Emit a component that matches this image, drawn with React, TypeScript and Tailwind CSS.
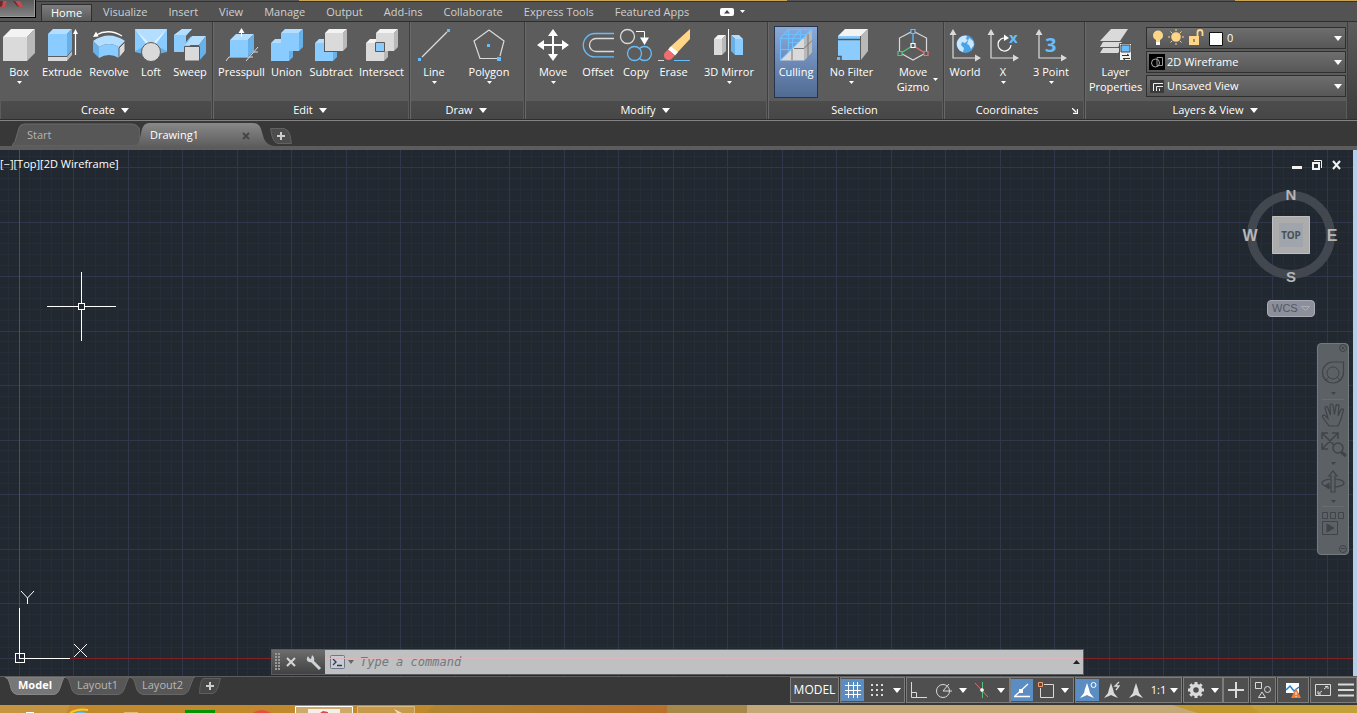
import React from "react";

type Kids = { children?: React.ReactNode };

const BLUE = { front: "#8accff", top: "#b3deff", side: "#67b0e8" };
const GRAY = { front: "#dadada", top: "#f3f3f3", side: "#b9b9b9" };

function Icon({ children }: Kids) {
  return (
    <svg width="32" height="32" viewBox="0 0 32 32" fill="none" className="block overflow-visible" aria-hidden="true">
      {children}
    </svg>
  );
}

function Cube({ x, y, w, d, c }: { x: number; y: number; w: number; d: number; c: typeof BLUE }) {
  return (
    <g>
      <path d={`M${x} ${y + d}h${w}v${w}h${-w}z`} fill={c.front} />
      <path d={`M${x} ${y + d}l${d} ${-d}h${w}l${-d} ${d}z`} fill={c.top} />
      <path d={`M${x + w} ${y + d}l${d} ${-d}v${w}l${-d} ${d}z`} fill={c.side} />
    </g>
  );
}

function Caret({ small }: { small?: boolean }) {
  return small ? (
    <svg width="5" height="3" viewBox="0 0 5 3" className="block" aria-hidden="true">
      <path d="M0 0h5L2.5 3z" fill="#fff" />
    </svg>
  ) : (
    <svg width="8" height="5" viewBox="0 0 8 5" className="block shrink-0" aria-hidden="true">
      <path d="M0 0h8L4 5z" fill="#fff" />
    </svg>
  );
}

function Axes() {
  return (
    <g>
      <path d="M4 5v24h23" stroke="#dadada" strokeWidth="1.2" />
      <path d="M0.500 6L4 0l3.500 6zM26 25.500l6 3.500-6 3.500z" fill="#dadada" />
    </g>
  );
}

const icons = {
  box: <Cube x={0} y={0} w={24} d={8} c={GRAY} />,
  extrude: (
    <g>
      <path d="M2 28h19v4H2z" fill="#dadada" />
      <path d="M21 28l5-6v4l-5 6z" fill="#b9b9b9" />
      <path d="M2 5h19v22H2z" fill={BLUE.front} />
      <path d="M2 5l5-5h19l-5 5z" fill={BLUE.top} />
      <path d="M21 5l5-5v21l-5 6z" fill={BLUE.side} />
      <path d="M29.500 4v22" stroke="#fff" strokeWidth="1.200" />
      <path d="M27 5l2.500-5L32 5z" fill="#fff" />
    </g>
  ),
  revolve: (
    <g>
      <path d="M0 12Q16 1 32 12l-6 6Q16 12 6 18z" fill={BLUE.top} />
      <path d="M6 18Q16 12 26 18v11Q16 23 6 29z" fill={BLUE.front} />
      <path d="M0 12l6 6v11l-6-6z" fill={BLUE.side} />
      <path d="M26 19l6-6v9l-6 7z" fill="#dadada" stroke="#555" />
      <path d="M3 6Q16-1 29 7" stroke="#fff" strokeWidth="1.300" />
      <path d="M0 8l3-5.500 2.500 5z" fill="#fff" />
    </g>
  ),
  loft: (
    <g>
      <path d="M0 0h32v23l-9 2H8l-8-2z" fill={BLUE.side} />
      <path d="M0 0h32L22 16H10z" fill={BLUE.top} />
      <path d="M0 0v22l8-4 3-4zM32 0v22l-8-4-3-4z" fill={BLUE.front} />
      <path d="M0 0l12 16 3-1zM32 0L20 16l-3-1z" fill="#dff1ff" />
      <circle cx="16" cy="23" r="9.500" fill="#dadada" stroke="#5a5a5a" />
    </g>
  ),
  sweep: (
    <g>
      <path d="M0 6l8-6h10l-6 7v7h6l-7 9H0z" fill={BLUE.front} />
      <path d="M0 6l8-6h10l-6 6z" fill={BLUE.top} />
      <path d="M11 14l6-7v7z" fill={BLUE.side} />
      <path d="M11 16l7-9h14l-7 9z" fill={BLUE.top} />
      <path d="M25 16l7-9v17l-7 8z" fill={BLUE.side} />
      <path d="M10.500 17.500h15v14.500h-15z" fill="#dadada" stroke="#5a5a5a" />
    </g>
  ),
  presspull: (
    <g>
      <path d="M0 32l3-4h24M20 32l12-14M26 23h6" stroke="#dadada" />
      <path d="M4 11h18v17H4z" fill={BLUE.front} />
      <path d="M4 11l6-6h18l-6 6z" fill={BLUE.top} />
      <path d="M22 11l6-6v17l-6 6z" fill={BLUE.side} />
      <path d="M15.500 3v5" stroke="#fff" />
      <path d="M12.500 4l3-5 3 5z" fill="#fff" />
    </g>
  ),
  union: (
    <g>
      <Cube x={0} y={10} w={18} d={4} c={BLUE} />
      <Cube x={10} y={0} w={18} d={4} c={BLUE} />
      <path d="M2 15h15v6H2z" fill={BLUE.front} />
    </g>
  ),
  subtract: (
    <g>
      <Cube x={0} y={10} w={18} d={4} c={BLUE} />
      <path d="M9 3h20v20H9z" fill="#5a5a5a" />
      <Cube x={10} y={0} w={18} d={4} c={GRAY} />
    </g>
  ),
  intersect: (
    <g>
      <Cube x={0} y={10} w={18} d={4} c={GRAY} />
      <Cube x={10} y={0} w={18} d={4} c={GRAY} />
      <path d="M9.500 13.500h9v9h-9z" fill={BLUE.front} stroke="#5a5a5a" />
    </g>
  ),
  line: (
    <g>
      <path d="M4 28L29 3" stroke="#dadada" strokeWidth="1.200" />
      <path d="M0 29h3v3H0zM29 0h3v3h-3z" fill="#67bdfb" />
    </g>
  ),
  polygon: (
    <g>
      <path d="M16 1L1 12l6 17.500h17M27 27l4-15L16 1" stroke="#dadada" strokeWidth="1.200" />
      <path d="M14 15h3v3h-3zM24 28h4v4h-4z" fill="#67bdfb" />
    </g>
  ),
  move: (
    <g>
      <path d="M16 5v22M5 16h22" stroke="#fff" strokeWidth="2" />
      <path d="M11 7l5-7 5 7zM11 25l5 7 5-7zM7 11l-7 5 7 5zM25 11l7 5-7 5z" fill="#fff" />
    </g>
  ),
  offset: (
    <g>
      <path d="M32 4.500H13a11.700 11.700 0 000 23.400h19" stroke="#67bdfb" strokeWidth="1.300" />
      <path d="M32 9.500H14a6.500 6.500 0 000 13h18" stroke="#dadada" strokeWidth="1.300" />
    </g>
  ),
  copy: (
    <g>
      <circle cx="7.500" cy="7.500" r="7" stroke="#dadada" strokeWidth="1.300" />
      <circle cx="14.500" cy="24.500" r="7" stroke="#67bdfb" strokeWidth="1.300" />
      <path d="M19.500 19.500a7 7 0 110 10" stroke="#67bdfb" strokeWidth="1.300" />
      <path d="M16 2.500h8.500V9" stroke="#fff" />
      <path d="M20 8.500h9L24.500 16z" fill="#fff" />
    </g>
  ),
  erase: (
    <g>
      <path d="M0 31.500h6" stroke="#dadada" />
      <path d="M16 31.500h16" stroke="#67bdfb" />
      <path d="M32 0v10L18 25l-7-6z" fill="#ffd588" />
      <path d="M13 17.500l-3 3 7 6 3-3.500z" fill="#fff" />
      <path d="M10 20.500l-3 3c-3 4 1 9 6 7l4-4z" fill="#f26d70" />
    </g>
  ),
  mirror: (
    <g>
      <path d="M1 10h8v16H1z" fill={GRAY.front} />
      <path d="M1 10l4-4h8l-4 4z" fill={GRAY.top} />
      <path d="M9 10l4-4v16l-4 4z" fill={GRAY.side} />
      <path d="M22 10h8v16h-8z" fill={BLUE.front} />
      <path d="M22 10l-4-4h8l4 4z" fill={BLUE.top} />
      <path d="M22 10l-4-4v16l4 4z" fill={BLUE.side} />
      <path d="M15.500 0v32" stroke="#fff" />
    </g>
  ),
  culling: (
    <g>
      <path d="M0 31.500L32 0v23l-8 8.500z" fill="#dadada" />
      <path d="M24 9l8-9v23l-8 8.500z" fill="#b9b9b9" />
      <path d="M12 20v11M14 19.500h10l8-8M28 5v23" stroke="#777" />
      <path d="M0.500 31V9l8-8.500h23M0.500 9.500H23M4 5.500h23M0.500 20.500H11M12.500 19V9.500l8-9M8.500 0.500V23M20.500 0.500V11M8.500 13.500H18M23 9.500l8-9" stroke="#6cc0ff" strokeWidth="1.200" />
      <path d="M0 31.500L32 0" stroke="#6cc0ff" />
    </g>
  ),
  filter: (
    <g>
      <path d="M2 7l7-7h23l-7 7z" fill="#f3f3f3" />
      <path d="M25 7l7-7v22l-7 9z" fill="#b9b9b9" />
      <path d="M2 7h22v24H2z" fill={BLUE.front} />
      <path d="M1 10.500h23M0 27.500h5v5" stroke="#555" strokeWidth="1.500" />
      <path d="M1 28h3v3H1z" fill="#67bdfb" />
    </g>
  ),
  gizmo: (
    <g>
      <path d="M16 2L29.500 9v14.500L16 31 2.500 23.500V9z" stroke="#dadada" strokeWidth="1.200" />
      <path d="M16 4v12" stroke="#67bdfb" strokeWidth="1.300" />
      <path d="M16 16.500L4 24" stroke="#4fc777" strokeWidth="1.300" />
      <path d="M16 16.500L28 24" stroke="#f26d70" strokeWidth="1.300" />
      <path d="M14 0.500h4v4h-4z" fill="#5a5a5a" stroke="#67bdfb" strokeWidth="1.200" />
      <path d="M14 14.500h4v4h-4z" fill="#5a5a5a" stroke="#fff" strokeWidth="1.200" />
      <path d="M1 22.500h4v4H1z" fill="#5a5a5a" stroke="#4fc777" strokeWidth="1.200" />
      <path d="M27 22.500h4v4h-4z" fill="#5a5a5a" stroke="#f26d70" strokeWidth="1.200" />
    </g>
  ),
  world: (
    <g>
      <Axes />
      <circle cx="16.500" cy="15" r="9" fill="#4aa3e6" />
      <path d="M9 11c2-4 6-5 9-4l-1 3 2 1-3 3-3-1-1 3 3 3-1 4c-4-1-7-5-6-10zM20 9l4 3 1 4-3 4-2-4-2-1z" fill="#c9e7ff" />
    </g>
  ),
  xAxis: (
    <g>
      <Axes />
      <path d="M24 16a6.500 6.500 0 11-5-6.800" stroke="#fff" strokeWidth="1.200" />
      <path d="M17 5.500l5 3.500-5 3z" fill="#fff" />
      <text x="22" y="14" fontSize="15" fontWeight="700" fontFamily="Open Sans, sans-serif" fill="#67bdfb">x</text>
    </g>
  ),
  threePoint: (
    <g>
      <Axes />
      <text x="10" y="23" fontSize="20" fontWeight="700" fontFamily="Open Sans, sans-serif" fill="#67bdfb">3</text>
    </g>
  ),
  layers: (
    <g>
      <path d="M11 0h17l-8 12H0z" fill="#dadada" />
      <path d="M3 13l-3 5h18l4-5zM3 19l-3 5h18l4-5z" fill="#dadada" />
      <path d="M19.500 14.500h12v17h-12z" fill="#f0f0f0" stroke="#555" />
      <path d="M21 16h9v7h-9z" fill="#67bdfb" stroke="#444" />
      <path d="M22 26.500h7l-2-1.500M30 29.500h-7l2 1.500" stroke="#333" />
    </g>
  ),
};

type Tool = { icon: keyof typeof icons; label: string; width: string; caret?: boolean; side?: boolean; active?: boolean };

function ToolButton({ icon, label, width, caret, side, active }: Tool) {
  return (
    <button
      type="button"
      className={`${width} relative flex h-[72px] shrink-0 flex-col items-center border ${
        active ? "border-[#27344f] bg-linear-to-b from-[#8aabda] to-[#506b93]" : "border-transparent"
      } pt-[2px]`}
    >
      <Icon>{icons[icon]}</Icon>
      <span className="mt-[3px] text-center text-[11px] leading-[15px] whitespace-pre">{label}</span>
      {caret && (
        <span className="mt-[2px]">
          <Caret small />
        </span>
      )}
      {side && (
        <span className="absolute right-[2px] bottom-[16px]">
          <Caret small />
        </span>
      )}
    </button>
  );
}

function Panel({ title, width, pad, caret, launcher, children }: Kids & { title: string; width: string; pad: string; caret?: boolean; launcher?: boolean }) {
  return (
    <section className={`${width} flex shrink-0 flex-col border-r border-[#3f3f3f] shadow-[1px_0_0_#686868]`}>
      <div className={`flex h-[79px] pt-1 ${pad}`}>{children}</div>
      <footer className={`relative mx-px flex h-[18px] items-center justify-center gap-[6px] bg-linear-to-b from-[#4c4c4c] to-[#474747] text-[11px] ${launcher ? "pr-[14px]" : "pr-[2px]"}`}>
        {title}
        {caret && <Caret />}
        {launcher && (
          <svg width="6" height="6" viewBox="0 0 6 6" fill="none" className="absolute right-[5px] bottom-[5px]" aria-hidden="true">
            <path d="M0 0l4 4M5.500 1v4.500H1" stroke="#fff" strokeWidth="1.300" />
          </svg>
        )}
      </footer>
    </section>
  );
}

const panels: { title: string; width: string; pad: string; caret?: boolean; launcher?: boolean; tools: Tool[] }[] = [
  {
    title: "Create", width: "w-[213px]", pad: "", caret: true,
    tools: [
      { icon: "box", label: "Box", width: "w-[38px]", caret: true },
      { icon: "extrude", label: "Extrude", width: "w-[48px]" },
      { icon: "revolve", label: "Revolve", width: "w-[46px]" },
      { icon: "loft", label: "Loft", width: "w-[38px]" },
      { icon: "sweep", label: "Sweep", width: "w-[40px]" },
    ],
  },
  {
    title: "Edit", width: "w-[197px]", pad: "pl-[5px]", caret: true,
    tools: [
      { icon: "presspull", label: "Presspull", width: "w-[47px]" },
      { icon: "union", label: "Union", width: "w-[43px]" },
      { icon: "subtract", label: "Subtract", width: "w-[46px]" },
      { icon: "intersect", label: "Intersect", width: "w-[55px]" },
    ],
  },
  {
    title: "Draw", width: "w-[115px]", pad: "pl-[2px]", caret: true,
    tools: [
      { icon: "line", label: "Line", width: "w-[44px]", caret: true },
      { icon: "polygon", label: "Polygon", width: "w-[66px]", caret: true },
    ],
  },
  {
    title: "Modify", width: "w-[243px]", pad: "pl-[5px]", caret: true,
    tools: [
      { icon: "move", label: "Move", width: "w-[46px]", caret: true },
      { icon: "offset", label: "Offset", width: "w-[44px]" },
      { icon: "copy", label: "Copy", width: "w-[32px]" },
      { icon: "erase", label: "Erase", width: "w-[43px]" },
      { icon: "mirror", label: "3D Mirror", width: "w-[68px]", caret: true },
    ],
  },
  {
    title: "Selection", width: "w-[176px]", pad: "pl-[6px]",
    tools: [
      { icon: "culling", label: "Culling", width: "w-[44px]", active: true },
      { icon: "filter", label: "No Filter", width: "w-[67px]", caret: true },
      { icon: "gizmo", label: "Move\nGizmo", width: "w-[56px]", side: true },
    ],
  },
  {
    title: "Coordinates", width: "w-[141px]", pad: "pl-[2px]", launcher: true,
    tools: [
      { icon: "world", label: "World", width: "w-[38px]" },
      { icon: "xAxis", label: "X", width: "w-[38px]", caret: true },
      { icon: "threePoint", label: "3 Point", width: "w-[58px]", caret: true },
    ],
  },
];

function Combo({ label, value, inset, children }: Kids & { label: string; value: string; inset: string }) {
  return (
    <label className="relative block h-[22px]">
      <span className="sr-only">{label}</span>
      <select
        className={`${inset} block h-[22px] w-full appearance-none border border-[#2f2f2f] bg-linear-to-b from-[#6e6e6e] to-[#575757] pr-4 text-[11px] text-white outline-none`}
        defaultValue={value}
      >
        <option>{value}</option>
      </select>
      <span className="pointer-events-none absolute inset-y-0 left-[3px] flex items-center">{children}</span>
      <span className="pointer-events-none absolute inset-y-0 right-[4px] flex items-center">
        <Caret />
      </span>
    </label>
  );
}

const menus = ["Visualize", "Insert", "View", "Manage", "Output", "Add-ins", "Collaborate", "Express Tools", "Featured Apps"];

function Ribbon() {
  return (
    <header className="shrink-0 bg-[#535353]">
      <div className="flex h-[2px] border-b border-[#333] bg-[#555]">
        <span className="w-[22%]" />
        <span className="w-[36%] bg-[#c9a452]" />
        <span className="w-[33%]" />
        <span className="flex-1 bg-[#c9a452]" />
      </div>
      <nav className="relative flex h-5 items-stretch gap-px border-b border-[#2e2e2e] pl-[41px] text-[11px] text-[#d0d0d0]">
        <button
          type="button"
          aria-label="Application menu"
          className="absolute -top-[2px] left-0 h-[18px] w-9 border-r border-b border-black bg-linear-to-b from-[#595959] to-[#858585] shadow-[inset_-1px_-1px_0_#999]"
        >
          <svg width="35" height="16" viewBox="0 0 35 16" className="block" aria-hidden="true">
            <path d="M3 0h4L5 6H2zM15 0h5l3 6h-3z" fill="#c64b4f" />
            <path d="M0 0h3L2 5 0 6zM13 0h2l4 6-2-1z" fill="#7d2328" />
          </svg>
        </button>
        <button type="button" className="mt-[2px] border border-b-0 border-[#2e2e2e] bg-linear-to-b from-[#7d7d7d] to-[#5b5b5b] px-[9px] leading-[14px] text-white">
          Home
        </button>
        {menus.map((m) => (
          <button key={m} type="button" className="px-[10px] pt-px">
            {m}
          </button>
        ))}
        <button type="button" aria-label="Minimize ribbon" className="ml-[20px] flex items-center gap-[6px]">
          <svg width="14" height="8" viewBox="0 0 14 8" aria-hidden="true">
            <rect width="14" height="8" rx="2" fill="#fff" />
            <path d="M4 5.500h6L7 2z" fill="#444" />
          </svg>
          <Caret small />
        </button>
      </nav>
      <div className="flex h-[97px] bg-[#5c5c5c] text-white">
        {panels.map(({ tools, ...p }) => (
          <Panel key={p.title} {...p}>
            {tools.map((t) => (
              <ToolButton key={t.label} {...t} />
            ))}
          </Panel>
        ))}
        <Panel title="Layers & View" width="w-[263px]" pad="pl-px" caret>
          <ToolButton icon="layers" label={"Layer\nProperties"} width="w-[59px]" />
          <div className="mt-px ml-px flex w-[200px] flex-col gap-[2px]">
            <Combo label="Layer" value="0" inset="pl-[80px]">
              <svg width="76" height="18" viewBox="0 0 76 18" fill="none" aria-hidden="true">
                <circle cx="9" cy="6.500" r="5" fill="#ffd588" />
                <path d="M7 10h4v3H7z" fill="#ffd588" />
                <path d="M7 13h4v3H7z" fill="#fff" />
                <circle cx="27" cy="8" r="4.800" fill="#ffd588" />
                <path d="M27 0v2M27 14v2M19 8h2M33 8h2M21.500 2.500l1.500 1.500M31 12l1.500 1.500M32.500 2.500L31 4M23 12l-1.500 1.500" stroke="#ffd588" />
                <path d="M40 7h10v9H40z" fill="#ffd588" />
                <path d="M48.500 7V3.500a2.500 2.500 0 015 0V7" stroke="#ffd588" strokeWidth="1.800" />
                <path d="M45 10v3" stroke="#444" />
                <path d="M60.500 3.500h13v13h-13z" fill="#fff" stroke="#111" />
              </svg>
            </Combo>
            <Combo label="Visual style" value="2D Wireframe" inset="pl-[20px]">
              <svg width="16" height="16" viewBox="0 0 16 16" fill="none" aria-hidden="true">
                <path d="M0 0h16v16H0z" fill="#000" />
                <circle cx="6.500" cy="9" r="4" stroke="#aaa" />
                <path d="M8 3.500h5.500v8H8z" stroke="#999" />
              </svg>
            </Combo>
            <Combo label="View" value="Unsaved View" inset="pl-[20px]">
              <svg width="16" height="16" viewBox="0 0 16 16" fill="none" aria-hidden="true">
                <path d="M1 2h14v13H1z" fill="#3a3a3a" />
                <path d="M4.500 13V5.500H14M7.500 13V8.500H14M10.500 13v-2.500" stroke="#eee" />
              </svg>
            </Combo>
          </div>
        </Panel>
        <div className="flex-1 bg-linear-to-b from-[#5c5c5c] to-[#3c3c3c]" />
      </div>
      <div className="h-[2px] border-t border-[#2e2e2e] bg-[#828282]" />
    </header>
  );
}

function FileTabs() {
  return (
    <nav className="flex h-[29px] shrink-0 items-end border-b-4 border-[#5c5c5c] bg-[#383838] pl-[12px] text-[11px]">
      <button type="button" className="relative h-[23px] w-[128px] pt-[2px] pl-[15px] text-left text-[#b4b4b4]">
        <svg viewBox="0 0 128 23" preserveAspectRatio="none" className="absolute inset-0 h-full w-full" aria-hidden="true">
          <path d="M-4 23Q3 22 4 15L7 5Q8 1 13 1H119Q126 1 128 7V23z" fill="#575757" stroke="#6b6b6b" />
        </svg>
        <span className="relative">Start</span>
      </button>
      <button type="button" className="relative flex h-[23px] w-[126px] items-center justify-between pt-[2px] pr-[16px] pl-[10px] text-white">
        <svg viewBox="0 0 126 23" preserveAspectRatio="none" className="absolute inset-0 h-full w-full overflow-visible" aria-hidden="true">
          <defs>
            <linearGradient id="fileTab" x1="0" y1="0" x2="0" y2="1">
              <stop offset="0" stopColor="#898989" />
              <stop offset="1" stopColor="#5e5e5e" />
            </linearGradient>
          </defs>
          <path d="M-5 23Q-1 21 0 15L2 6Q4 0 9 0H113Q119 0 121 6L124 16Q127 22 134 23z" fill="url(#fileTab)" />
        </svg>
        <span className="relative">Drawing1</span>
        <svg width="8" height="8" viewBox="0 0 8 8" className="relative" aria-hidden="true">
          <path d="M1 1l6 6M7 1L1 7" stroke="#454545" strokeWidth="2" />
        </svg>
      </button>
      <button type="button" aria-label="New drawing" className="mb-[2px] ml-[4px]">
        <svg width="22" height="16" viewBox="0 0 22 16" fill="none" className="block" aria-hidden="true">
          <path d="M0.500 0.500H14Q18 1 20 7l1.500 8.500H8Q4 15 2 8z" fill="#4d4d4d" stroke="#626262" />
          <path d="M11 4v8M7 8h8" stroke="#ccc" strokeWidth="2" />
        </svg>
      </button>
    </nav>
  );
}

/* Five minor cells of 10.9 px make up one major cell. */
const steps = Array.from({ length: 260 }, (_, i) => i - 2);

function ModelGrid() {
  return (
    <svg className="absolute inset-0 h-full w-full" shapeRendering="crispEdges" fill="none" aria-hidden="true">
      {[false, true].map((major) =>
        steps
          .filter((i) => (i % 5 === 0) === major)
          .map((i) => {
            const x = Math.floor(19 + i * 10.9) + 0.5;
            const y = Math.floor(508 - i * 10.9) + 0.5;
            const stroke = major ? "#30374a" : "#262d38";
            return (
              <g key={`${major}${i}`} stroke={stroke}>
                <line x1={x} x2={x} y1="0" y2="100%" />
                <line x1="0" x2="100%" y1={y} y2={y} />
              </g>
            );
          })
      )}
      <line x1="19.500" x2="19.500" y1="0" y2="458" stroke="#1f7026" />
      <line x1="70" x2="100%" y1="508.500" y2="508.500" stroke="#7f2226" />
      <g stroke="#fff">
        <path d="M19.500 458v50.500H70M15.500 503.500h9v9h-9z" />
        <path d="M47 156.500h31M85 156.500h31M81.500 122v31M81.500 160v31M78.500 153.500h6v6h-6z" />
      </g>
      <g stroke="#fff" shapeRendering="geometricPrecision">
        <path d="M21 441l6.500 7 6.500-7M27.500 448v6M74 494l13 13M87 494l-13 13" />
      </g>
    </svg>
  );
}

function ViewCube() {
  return (
    <div className="absolute top-[36px] right-[12px] flex w-[100px] flex-col items-center">
      <svg width="100" height="104" viewBox="0 0 100 104" role="img" aria-label="View cube">
        <circle cx="50" cy="49" r="39.500" fill="none" stroke="#434850" strokeWidth="9" />
        <path d="M31.500 30.500h37v37h-37z" fill="#acacac" stroke="#c0c0c0" />
        <path d="M38 37h24v24H38z" fill="#9fa5aa" />
        <g fontFamily="Liberation Sans, sans-serif" fontWeight="700" textAnchor="middle" fill="#b4b6b8">
          <text x="50" y="14" fontSize="15">N</text>
          <text x="9" y="55" fontSize="16">W</text>
          <text x="91" y="55" fontSize="16">E</text>
          <text x="50" y="96" fontSize="15">S</text>
          <text x="50" y="53" fontSize="10" fill="#4a5058" fontFamily="Noto Sans, sans-serif">TOP</text>
        </g>
      </svg>
      <button type="button" className="mt-[10px] flex h-[17px] w-12 items-center justify-between rounded-[4px] border border-[#a8abb5] bg-[#8d909b] px-1 font-['Liberation_Sans',sans-serif] text-[11px] text-[#535865]">
        WCS
        <svg width="9" height="5" viewBox="0 0 9 5" fill="none" aria-hidden="true">
          <path d="M0.500 0.500h8l-4 4z" stroke="#a9acb5" />
        </svg>
      </button>
    </div>
  );
}

function NavBar() {
  return (
    <aside className="absolute top-[193px] right-[4px] h-[212px] w-8 rounded-[4px] border border-[#757a7f] bg-[#5c6166]" aria-label="Navigation bar">
      <svg width="30" height="210" viewBox="0 0 30 210" fill="none" stroke="#3f444a" aria-hidden="true">
        <circle cx="25" cy="4" r="3.500" />
        <path d="M23.500 2.500l3 3M26.500 2.500l-3 3" />
        <path d="M15 18h10.500v10.500a10.500 10.500 0 11-10.500-10.500z" strokeWidth="1.200" />
        <circle cx="15" cy="29" r="6" />
        <path d="M11 33l-4 4M19 33l4 4" />
        <path d="M11 82L4.500 73q-.5-2.500 2.500-1.500l3 3L7 64q.5-2.500 2.500-1l3 8L12 61q1.500-2 3 0l1.500 9.500L18 61.500q1.500-1.500 3 0L20 72l3-6.500q2-1.500 2.500.5L23 75l-3 7z" strokeWidth="1.200" />
        <path d="M4 89l16 16M20 89L4 105M4 95v-6h6M14 89h6v6M4 99v6h6" strokeWidth="1.500" />
        <circle cx="20" cy="104" r="5" fill="#5c6166" strokeWidth="1.500" />
        <path d="M23 108l5 4" strokeWidth="3" />
        <ellipse cx="15" cy="139" rx="11" ry="4" strokeWidth="1.200" />
        <path d="M13 148v-16h-2l4-5 4 5h-2v16z" fill="#5c6166" strokeWidth="1.200" />
        <path d="M11 139v6l-4-3z" fill="#3f444a" />
        <path d="M4.500 168.500h5v6h-5zM12.500 168.500h5v6h-5zM20.500 168.500h5v6h-5zM4.500 177.500h15v13h-15z" />
        <path d="M9 180l7 4-7 4z" fill="#3f444a" />
        <path d="M13 48h5l-2.500 3zM13 118h5l-2.500 3zM13 156h5l-2.500 3z" fill="#3f444a" stroke="none" />
        <path d="M4 55.500h22M4 162.500h22" stroke="#686d72" />
        <circle cx="25" cy="205" r="3.500" />
        <path d="M23 204.500h4" />
      </svg>
    </aside>
  );
}

function CommandLine() {
  return (
    <form className="absolute right-[269px] bottom-px left-[271px] flex h-[26px] border border-[#5b5e62]" onSubmit={(e) => e.preventDefault()}>
      <div className="flex w-[53px] items-center bg-linear-to-b from-[#6d6d6d] to-[#424242]">
        <svg width="52" height="24" viewBox="0 0 52 24" fill="none" aria-hidden="true">
          <path d="M4 3v18M7 3v18" stroke="#9a9a9a" strokeWidth="2" strokeDasharray="2 1" />
          <path d="M15 8l8 8M23 8l-8 8" stroke="#d6d6d6" strokeWidth="2" />
          <path d="M40 11l8 8" stroke="#cfd3d8" strokeWidth="3" />
          <path d="M36 6q-3 4 1 6 3 1 5-1 1-4-2-6l-1 4-2-1z" fill="#cfd3d8" />
        </svg>
      </div>
      <label className="relative flex flex-1 items-center bg-[#bfc0c2] pl-[5px]">
        <span className="sr-only">Command</span>
        <svg width="24" height="16" viewBox="0 0 24 16" fill="none" aria-hidden="true">
          <rect x="0.500" y="1.500" width="14" height="13" rx="1" fill="#c8cbd3" stroke="#6f7687" />
          <path d="M3 5l3 3-3 3M7 11.500h5" stroke="#333b4c" strokeWidth="1.300" />
          <path d="M18 6h6l-3 4z" fill="#666" />
        </svg>
        <input
          placeholder="Type a command"
          className="ml-[6px] min-w-0 flex-1 bg-transparent font-['DejaVu_Sans_Mono',monospace] text-[12px] text-[#333] italic outline-none placeholder:text-[#75777a]"
        />
        <svg width="7" height="4" viewBox="0 0 7 4" className="mr-[3px]" aria-hidden="true">
          <path d="M0 4h7L3.500 0z" fill="#222" />
        </svg>
        <span className="pointer-events-none absolute inset-x-0 top-[8px] h-px bg-[#d9b9bb]" />
      </label>
    </form>
  );
}

function Viewport() {
  return (
    <main className="relative min-h-0 flex-1 overflow-hidden border-r-4 border-[#b4cfea] bg-[#212830]">
      <ModelGrid />
      <p className="absolute top-[6px] left-0 text-[11px] leading-4 text-white">[−][Top][2D Wireframe]</p>
      <div className="absolute top-[9px] right-[10px] flex gap-[8px]">
        <button type="button" aria-label="Minimize">
          <svg width="12" height="12" viewBox="0 0 12 12" aria-hidden="true">
            <path d="M1 7h10v3H1z" fill="#f2f2f2" />
          </svg>
        </button>
        <button type="button" aria-label="Restore">
          <svg width="12" height="12" viewBox="0 0 12 12" fill="none" aria-hidden="true">
            <path d="M3 1.500h7.500V9" stroke="#f2f2f2" />
            <path d="M2 4h6v6H2z" stroke="#f2f2f2" strokeWidth="2" />
          </svg>
        </button>
        <button type="button" aria-label="Close">
          <svg width="12" height="12" viewBox="0 0 12 12" fill="none" aria-hidden="true">
            <path d="M2 2l7 8M9 2l-7 8" stroke="#f2f2f2" strokeWidth="2" />
          </svg>
        </button>
      </div>
      <ViewCube />
      <NavBar />
      <CommandLine />
    </main>
  );
}

function LayoutTab({ label, width, active }: { label: string; width: string; active?: boolean }) {
  return (
    <button type="button" className={`relative flex h-[18px] ${width} items-center justify-center pb-px ${active ? "font-bold text-white" : "text-[#b8b8b8]"}`}>
      <svg viewBox="0 0 65 18" preserveAspectRatio="none" className="absolute inset-0 h-full w-full" aria-hidden="true">
        <path d="M0 0Q4 1 5 6l2 7q2 4 6 4.500H52q5 0 7-5l3-8Q63 1 65 0z" fill={active ? "#777" : "#575757"} stroke={active ? "#888" : "#666"} />
      </svg>
      <span className="relative">{label}</span>
    </button>
  );
}

function Cell({ width, on, label, children }: Kids & { width: string; on?: boolean; label: string }) {
  return (
    <button type="button" aria-label={label} className={`${width} ${on ? "bg-[#5c8dc2]" : ""} flex h-[22px] shrink-0 items-center justify-center`}>
      {children}
    </button>
  );
}

function Group({ width, children }: Kids & { width: string }) {
  return <div className={`${width} flex h-[26px] shrink-0 items-center border border-[#7d7d7d] bg-[#4f4f4f]`}>{children}</div>;
}

function Glyph({ children }: Kids) {
  return (
    <svg width="16" height="16" viewBox="0 0 16 16" fill="none" stroke="#dadada" className="block shrink-0 overflow-visible" aria-hidden="true">
      {children}
    </svg>
  );
}

const compass = "M8 0l2 6 1 4 4 5-5-2-2-1-2 1-5 2 4-5 1-4z";

function StatusBar() {
  return (
    <footer className="flex h-[29px] shrink-0 items-start justify-between border-t border-[#5e5e5e] bg-[#383838] text-[11px]">
      <nav className="flex pl-[5px]">
        <LayoutTab label="Model" width="w-[60px]" active />
        <LayoutTab label="Layout1" width="w-[65px]" />
        <LayoutTab label="Layout2" width="w-[65px]" />
        <button type="button" aria-label="New layout" className="ml-[4px]">
          <svg width="22" height="16" viewBox="0 0 22 16" fill="none" aria-hidden="true">
            <path d="M4 0.500H21.500L19 9q-2 6-5 6.500H0.500Q1 3 4 0.500z" fill="#474747" stroke="#5e5e5e" />
            <path d="M11 4v8M7 8h8" stroke="#ccc" strokeWidth="2" />
          </svg>
        </button>
      </nav>
      <div className="flex gap-px text-white">
        <Group width="w-[49px]">
          <button type="button" className="w-full text-center text-[12px]">MODEL</button>
        </Group>
        <Group width="w-[65px]">
          <Cell width="w-[23px]" on label="Grid">
            <Glyph><path d="M3.500 0v16M8.500 0v16M12.500 0v16M0 3.500h16M0 8.500h16M0 12.500h16" stroke="#fff" /></Glyph>
          </Cell>
          <Cell width="w-[26px]" label="Snap">
            <Glyph><path d="M2 3h13M2 8h13M2 13h13" strokeWidth="2" strokeDasharray="2 3" /></Glyph>
          </Cell>
          <Cell width="w-[14px]" label="Snap options"><Caret /></Cell>
        </Group>
        <div className="flex">
          <Group width="w-[104px]">
            <Cell width="w-[24px]" label="Ortho"><Glyph><path d="M0.500 0v15.500H16M0.500 10.500h5v5" /></Glyph></Cell>
            <Cell width="w-[25px]" label="Polar"><Glyph><circle cx="7" cy="9" r="6.500" /><path d="M7 9l6-7M7 9h9" /></Glyph></Cell>
            <Cell width="w-[14px]" label="Polar options"><Caret /></Cell>
            <Cell width="w-[24px]" label="Isodraft"><Glyph><path d="M1 1l13 14" stroke="#e46a6e" /><path d="M8.500 0v16" stroke="#55c57b" /><circle cx="8" cy="8" r="1.500" fill="#fff" /></Glyph></Cell>
            <Cell width="w-[14px]" label="Isodraft options"><Caret /></Cell>
          </Group>
          <Group width="w-[64px]">
            <Cell width="w-[22px]" on label="Object snap tracking"><Glyph><path d="M0 14.500h16M1 14L14 2" stroke="#fff" strokeWidth="1.300" /><path d="M5 7h4v4H5z" fill="#fff" stroke="none" /></Glyph></Cell>
            <Cell width="w-[25px]" label="Object snap"><Glyph><path d="M6 2.500h9.500v13h-13V6" /><path d="M0.500 0.500h4v4h-4z" stroke="#f5a06c" /></Glyph></Cell>
            <Cell width="w-[14px]" label="Object snap options"><Caret /></Cell>
          </Group>
        </div>
        <Group width="w-[107px]">
          <Cell width="w-[23px]" on label="Annotation visibility"><Glyph><path d={compass} fill="#fff" stroke="none" transform="translate(-1,1)" /><circle cx="13.500" cy="3" r="2.500" stroke="#fff" /></Glyph></Cell>
          <Cell width="w-[25px]" label="Autoscale"><Glyph><path d={compass} fill="#dadada" stroke="none" transform="translate(-1,1)" /><path d="M15 0l-4 4h4l-3 4" strokeWidth="1.300" /></Glyph></Cell>
          <Cell width="w-[24px]" label="Annotation scale"><Glyph><path d={compass} fill="#dadada" stroke="none" transform="translate(0,1)" /></Glyph></Cell>
          <button type="button" className="flex h-[22px] flex-1 items-center justify-center gap-[4px] text-[11px]">1:1 <Caret /></button>
        </Group>
        <div className="flex">
          <Group width="w-[40px]">
            <Cell width="w-[24px]" label="Workspace">
              <Glyph><circle cx="8" cy="8" r="4.500" strokeWidth="3.500" /><path d="M8 0v3M8 13v3M0 8h3M13 8h3M2.300 2.300l2 2M11.700 11.700l2 2M13.700 2.300l-2 2M2.300 13.700l2-2" strokeWidth="3" /></Glyph>
            </Cell>
            <Cell width="w-[14px]" label="Workspace options"><Caret /></Cell>
          </Group>
          <Group width="w-[26px]"><Cell width="w-[24px]" label="Monitor"><Glyph><path d="M8 0v16M0 8h16" strokeWidth="2" /></Glyph></Cell></Group>
        </div>
        <Group width="w-[26px]"><Cell width="w-[24px]" label="Isolate objects"><Glyph><path d="M0.500 0.500h6v6h-6zM7 10l3.500 5.500h-7z" /><circle cx="12.500" cy="7.500" r="3" /></Glyph></Cell></Group>
        <Group width="w-[32px]"><Cell width="w-[30px]" label="Graphics performance"><Glyph><path d="M1 1h13v10H1z" fill="#fff" stroke="none" /><path d="M1 8l4-4 4 5 5-4" stroke="#1f7fd0" strokeWidth="1.500" /><path d="M11 6l5 10H6z" fill="#ee7b31" stroke="none" /><path d="M11 10v3M11 14v1" stroke="#fff" /></Glyph></Cell></Group>
        <Group width="w-[47px]">
          <Cell width="w-[24px]" label="Clean screen"><Glyph><path d="M0.500 2.500h15v11h-15zM9 7l4-3M7 9l-4 3M10 4.500h3V7M3 9v3h3" /></Glyph></Cell>
          <Cell width="w-[21px]" label="Customization"><Glyph><path d="M0 2.500h16M0 8h16M0 13.500h16" strokeWidth="2" /></Glyph></Cell>
        </Group>
      </div>
    </footer>
  );
}

function Taskbar() {
  return (
    <div className="h-[8px] shrink-0 overflow-hidden bg-[#c0982f]">
      <svg width="100%" height="8" className="block" aria-hidden="true">
        <defs>
          <linearGradient id="amber">
            <stop offset="0" stopColor="#b38632" />
            <stop offset="1" stopColor="#b8712a" />
          </linearGradient>
        </defs>
        <path d="M0 0h440v8H0z" fill="#c1892b" />
        <path d="M0 0h70L66 8H0z" fill="#c79440" />
        <path d="M435 0h232v8H425z" fill="url(#amber)" />
        <path d="M667 0h80v8h-80z" fill="#a8884a" />
        <path d="M747 0h425l26 8H747z" fill="#c4a878" />
        <path d="M1250 0h1500v8H1260z" fill="#c4a03b" />
        <path d="M26 7h8v1h-8z" fill="#fff" />
        <path d="M70 8q8-5 18-3" stroke="#f7c82b" strokeWidth="2" fill="none" />
        <path d="M75 8q6-3 12 0z" fill="#66b9e8" />
        <path d="M124 7h14v1h-14z" fill="#ddba7d" />
        <path d="M185 5h30v3h-30z" fill="#059305" />
        <path d="M253 8q9-6 18 0z" fill="#e4503c" />
        <path d="M295.500 1.500h57v8h-57z" fill="#cda96a" stroke="#fff" />
        <path d="M308 4h32v4h-32z" fill="#f7eeea" />
        <path d="M320 8l3-2 5 1v1z" fill="#d94a46" />
        <path d="M357.500 1.500h57v8h-57z" fill="#c79a4b" stroke="#d9bb82" />
        <path d="M394 4l8 4h-5z" fill="#f3dcc0" />
      </svg>
    </div>
  );
}

export default function App() {
  return (
    <div className="flex h-screen flex-col overflow-hidden bg-[#383838] font-['Open_Sans','Noto_Sans',sans-serif]">
      <Ribbon />
      <FileTabs />
      <Viewport />
      <StatusBar />
      <Taskbar />
    </div>
  );
}
